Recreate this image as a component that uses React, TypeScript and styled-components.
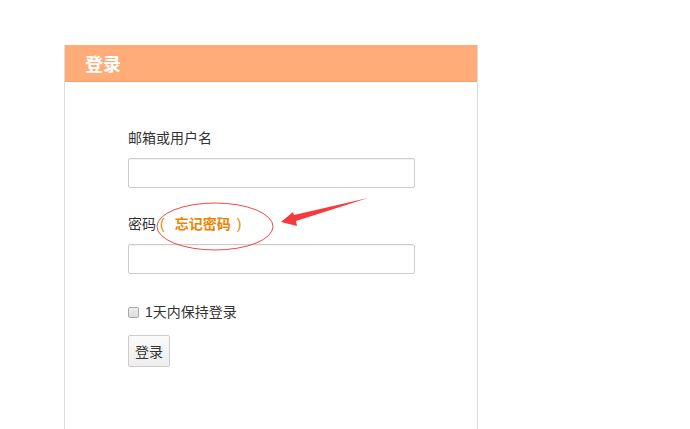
import styled, { createGlobalStyle } from "styled-components";

const GlobalStyle = createGlobalStyle`
  html, body {
    margin: 0;
    padding: 0;
    overflow: hidden;
    background: #fff;
  }
  body {
    font-family: "Liberation Sans", "Noto Sans CJK SC", sans-serif;
    font-size: 14px;
    color: #333;
  }
`;

const Page = styled.div`
  position: relative;
  padding: 45px 0 0 64px;
`;

const Panel = styled.div`
  width: 412px;
  border: 1px solid #ddd;
  border-top: none;
  min-height: 420px;
`;

const PanelHeader = styled.div`
  height: 37px;
  background: #ffac78;
  border-bottom: 1px solid #f3a06c;
  box-sizing: border-box;
  display: flex;
  align-items: center;
  padding-left: 20px;
  color: #fff;
  font-size: 18px;
  font-weight: bold;
`;

const PanelBody = styled.form`
  padding: 46px 0 0 63px;
  display: flex;
  flex-direction: column;
`;

const Label = styled.label`
  line-height: 20px;
  margin-bottom: 10px;
`;

const Forgot = styled.a`
  color: #ef8200;
  font-weight: bold;
  text-decoration: none;
  margin-left: 4px;
`;

const Paren = styled.span<{ $side: "l" | "r" }>`
  font-weight: normal;
  ${(p) => (p.$side === "l" ? "margin-right: 10px;" : "margin-left: 6px;")}
`;

const TextInput = styled.input<{ $gap?: number }>`
  width: 287px;
  height: 30px;
  box-sizing: border-box;
  border: 1px solid #ccc;
  border-radius: 2px;
  box-shadow: inset 0 1px 1px rgba(0, 0, 0, 0.05);
  margin-bottom: ${(p) => p.$gap ?? 26}px;
  outline: none;
`;

const CheckRow = styled.label`
  display: flex;
  align-items: center;
  gap: 6px;
  line-height: 20px;
  margin-bottom: 13px;
`;

const CheckBox = styled.input`
  appearance: none;
  margin: 0;
  width: 11px;
  height: 11px;
  border: 1px solid #a9a9a9;
  border-radius: 2px;
  background: linear-gradient(#eee, #dcdcdc);
`;

const SubmitButton = styled.button`
  align-self: flex-start;
  height: 32px;
  padding: 0 6px;
  font-family: "Liberation Sans", "Noto Sans CJK SC", sans-serif;
  font-size: 14px;
  color: #333;
  background: linear-gradient(#fafafa, #eee);
  border: 1px solid #ccc;
  border-radius: 2px;
`;

const Annotation = styled.svg`
  position: absolute;
  left: 0;
  top: 0;
  pointer-events: none;
`;

export default function App() {
  return (
    <>
      <GlobalStyle />
      <Page>
        <Panel>
          <PanelHeader>登录</PanelHeader>
          <PanelBody onSubmit={(e) => e.preventDefault()}>
            <Label>邮箱或用户名</Label>
            <TextInput type="text" />
            <Label>
              密码
              <Forgot href="#">
                <Paren $side="l">(</Paren>忘记密码<Paren $side="r">)</Paren>
              </Forgot>
            </Label>
            <TextInput type="password" $gap={28} />
            <CheckRow>
              <CheckBox type="checkbox" />
              1天内保持登录
            </CheckRow>
            <SubmitButton>登录</SubmitButton>
          </PanelBody>
        </Panel>
        <Annotation width="690" height="429">
          <ellipse cx="215" cy="226.5" rx="58" ry="23.5" fill="none" stroke="#f04848" strokeWidth="1" />
          <polygon
            points="281,222 293,212 294,215 368,198 296,221 297,226"
            fill="#f7393b"
          />
        </Annotation>
      </Page>
    </>
  );
}
